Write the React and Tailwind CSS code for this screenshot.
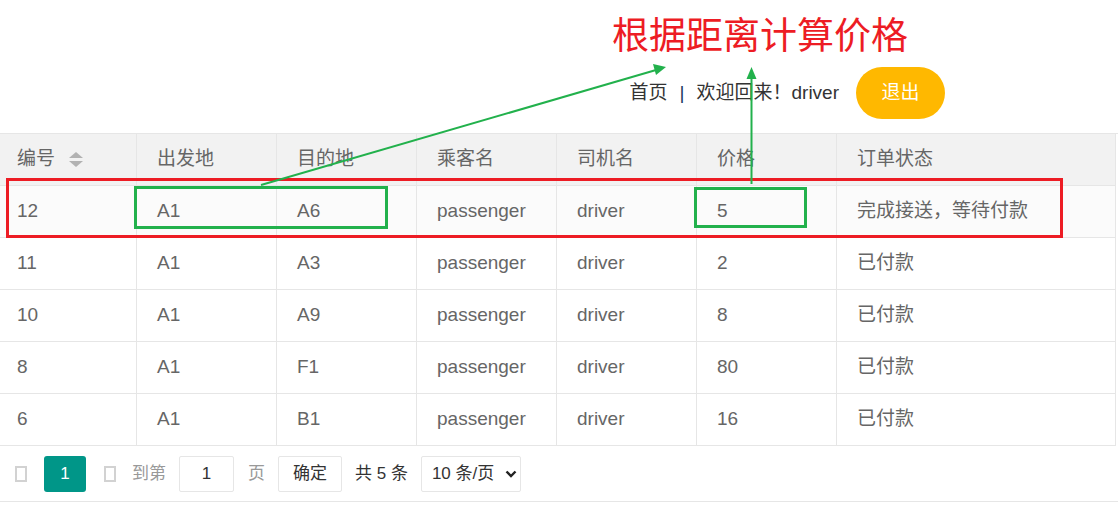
import React from "react";

const columns = ["编号", "出发地", "目的地", "乘客名", "司机名", "价格", "订单状态"];

const rows = [
  ["12", "A1", "A6", "passenger", "driver", "5", "完成接送，等待付款"],
  ["11", "A1", "A3", "passenger", "driver", "2", "已付款"],
  ["10", "A1", "A9", "passenger", "driver", "8", "已付款"],
  ["8", "A1", "F1", "passenger", "driver", "80", "已付款"],
  ["6", "A1", "B1", "passenger", "driver", "16", "已付款"],
];

const colClass = [
  "w-[137px] pl-[17px]",
  "w-[140px] pl-[20px]",
  "w-[140px] pl-[20px]",
  "w-[140px] pl-[20px]",
  "w-[140px] pl-[20px]",
  "w-[140px] pl-[20px]",
  "w-[279px] pl-[20px]",
];

function SortIcon() {
  return (
    <svg width="14" height="15" viewBox="0 0 14 15" className="ml-[14px]">
      <polygon points="0,6 7,0 14,6" fill="#b2b2b2" />
      <polygon points="0,9 7,15 14,9" fill="#b2b2b2" />
    </svg>
  );
}

// missing icon-font glyph, shown as an empty box
function Tofu() {
  return <span className="block h-[16px] w-[12px] border-2 border-[#d2d2d2]" />;
}

function Annotations() {
  return (
    <svg
      width="1118"
      height="506"
      viewBox="0 0 1118 506"
      className="pointer-events-none absolute left-0 top-0"
    >
      <rect x="7.5" y="179.5" width="1054" height="57" fill="none" stroke="#ed1c24" strokeWidth="3" />
      <rect x="135.5" y="187.5" width="251" height="40" fill="none" stroke="#22b14c" strokeWidth="3" />
      <rect x="695.5" y="188.5" width="110" height="38" fill="none" stroke="#22b14c" strokeWidth="3" />
      {/* arrow to title */}
      <line x1="261" y1="185" x2="656" y2="70" stroke="#22b14c" strokeWidth="2" />
      <polygon points="666,67 653,64 656,75" fill="#22b14c" />
      {/* arrow up from price */}
      <line x1="751.5" y1="184" x2="751.5" y2="78" stroke="#22b14c" strokeWidth="2" />
      <polygon points="751.5,67 746.5,79 756.5,79" fill="#22b14c" />
    </svg>
  );
}

export default function App() {
  return (
    <div
      className="relative h-[506px] w-[1118px] overflow-hidden bg-white"
      style={{ fontFamily: '"Liberation Sans", Arial, "Noto Sans CJK SC", sans-serif' }}
    >
      {/* top nav */}
      <div className="flex h-[133px] items-start justify-end pr-[173px] pt-[67px]">
        <div className="flex h-[52px] items-center text-[19px] text-[#333]">
          <span>首页</span>
          <span className="mx-[12px] text-[#1e3a5f]">|</span>
          <span>欢迎回来！driver</span>
          <button className="ml-[17px] h-[52px] w-[89px] rounded-full bg-[#ffb800] text-[19px] text-white">
            退出
          </button>
        </div>
      </div>

      {/* table */}
      <div className="w-[1118px] border-t border-[#e6e6e6]">
        <div className="flex h-[52px] w-[1116px] border-b border-[#e6e6e6] bg-[#f2f2f2] text-[19px] text-[#666]">
          {columns.map((c, i) => (
            <div
              key={c}
              className={`flex items-center border-r border-[#e6e6e6] ${colClass[i]}`}
            >
              <span>{c}</span>
              {i === 0 && <SortIcon />}
            </div>
          ))}
        </div>
        {rows.map((r, ri) => (
          <div
            key={r[0]}
            className={`flex h-[52px] w-[1116px] border-b border-[#e6e6e6] text-[19px] text-[#666] ${
              ri === 0 ? "bg-[#fbfbfb]" : "bg-white"
            }`}
          >
            {r.map((v, i) => (
              <div
                key={i}
                className={`flex items-center border-r border-[#e6e6e6] ${colClass[i]}`}
              >
                {v}
              </div>
            ))}
          </div>
        ))}
      </div>

      {/* pagination */}
      <div className="flex h-[56px] items-center border-b border-[#e6e6e6] pl-[15px] text-[17px]">
        <Tofu />
        <span className="ml-[17px] flex h-[36px] w-[42px] items-center justify-center rounded-[3px] bg-[#009688] text-white">
          1
        </span>
        <span className="ml-[18px]">
          <Tofu />
        </span>
        <span className="ml-[16px] text-[#999]">到第</span>
        <span className="ml-[13px] flex h-[36px] w-[55px] items-center justify-center rounded-[2px] border border-[#e6e6e6] text-[#333]">
          1
        </span>
        <span className="ml-[14px] text-[#999]">页</span>
        <span className="ml-[13px] flex h-[36px] w-[64px] items-center justify-center rounded-[2px] border border-[#e6e6e6] text-[#333]">
          确定
        </span>
        <span className="ml-[13px] text-[#333]">共 5 条</span>
        <span className="ml-[13px] flex h-[36px] w-[100px] items-center rounded-[2px] border border-[#e6e6e6] pl-[10px] text-[#333]">
          10 条/页
          <svg width="12" height="8" viewBox="0 0 12 8" className="ml-[11px]">
            <polyline points="1.5,1.5 6,6 10.5,1.5" fill="none" stroke="#222" strokeWidth="2.4" />
          </svg>
        </span>
      </div>

      {/* title annotation */}
      <div className="absolute left-[612px] top-[18px] text-[37px] leading-[37px] text-[#ed1c24]">
        根据距离计算价格
      </div>

      <Annotations />
    </div>
  );
}
